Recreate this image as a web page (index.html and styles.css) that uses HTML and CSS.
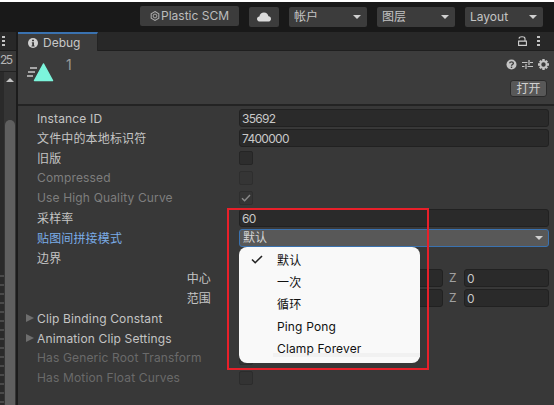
FILE: index.html
```html
<!DOCTYPE html>
<html lang="en">

<head>
    <meta charset="UTF-8">
    <title>Debug</title>
    <link rel="stylesheet" href="styles.css">
</head>

<body>
<div class="toolbar">
    <div class="tool-btn plastic">
        <svg class="plastic-icon" width="10" height="10" viewBox="0 0 10 10"><path d="M5 .6 8.8 2.8V7.200L5 9.400 1.200 7.200V2.800Z" fill="none" stroke="#a8a8a8" stroke-width="1.100"/><circle cx="5" cy="5" r="1.900" fill="none" stroke="#a8a8a8"/></svg>
        <span>Plastic SCM</span>
    </div>
    <div class="tool-btn cloud">
        <svg width="14" height="10" viewBox="0 0 14 10"><path d="M3 9.500C1.300 9.500 0 8.400 0 6.900 0 5.500 1 4.500 2.400 4.400 2.800 2 4.700.5 7 .5 9.300.5 11 2 11.500 4.300 13 4.400 14 5.500 14 6.900 14 8.400 12.800 9.500 11.200 9.500Z" fill="#dcdcdc"/></svg>
    </div>
    <div class="tool-btn drop"><span>帐户</span><i class="caret"></i></div>
    <div class="tool-btn drop"><span>图层</span><i class="caret"></i></div>
    <div class="tool-btn drop"><span>Layout</span><i class="caret"></i></div>
</div>

<div class="main">
    <div class="side">
        <div class="side-head">
            <svg width="3" height="10" viewBox="0 0 3 10"><path d="M0 0h3v2H0zM0 4h3v2H0zM0 8h3v2H0z" fill="#c4c4c4"/></svg>
        </div>
        <div class="side-num">25</div>
        <div class="side-body">
            <div class="side-edge"></div>
            <div class="side-scroll">
                <i class="scroll-up"></i>
                <div class="scroll-thumb"></div>
            </div>
        </div>
    </div>

    <div class="panel">
        <div class="tabbar">
            <div class="tab">
                <svg width="10" height="10" viewBox="0 0 10 10"><circle cx="5" cy="5" r="5" fill="#d2d2d2"/><path d="M4 1.800h2v1.500H4zM3.800 4.200H6v3.200h.6v1H3.500v-1h.7V5.200h-.4z" fill="#3c3c3c"/></svg>
                <span>Debug</span>
            </div>
            <div class="tab-tools">
                <svg width="9" height="10" viewBox="0 0 9 10"><path d="M1 2.600C1.200.2 6.800.2 7 2.600V5" fill="none" stroke="#d0d0d0" stroke-width="1.100"/><path d="M.6 5.100h7.800v4.300H.6z" fill="none" stroke="#d0d0d0" stroke-width="1.100"/></svg>
                <svg class="dots" width="3" height="10" viewBox="0 0 3 10"><path d="M0 0h3v2H0zM0 4h3v2H0zM0 8h3v2H0z" fill="#c4c4c4"/></svg>
            </div>
        </div>

        <div class="head">
            <div class="asset-icon">
                <svg width="28" height="21" viewBox="0 0 28 21"><path d="M4 7h7M2 11h7M1 15h6" stroke="#c9c9c9" stroke-width="1.600" fill="none"/><path d="M17.500 3 26.500 19.500H8.500Z" fill="#7cf5dc" stroke="#7cf5dc" stroke-width="1.500" stroke-linejoin="round"/></svg>
            </div>
            <div class="asset-name">1</div>
            <div class="head-right">
                <div class="head-icons">
                    <svg width="11" height="11" viewBox="0 0 11 11"><circle cx="5.500" cy="5.500" r="5" fill="#c4c4c4"/><path d="M3.600 4.200C3.800 2.300 7.400 2.300 7.400 4.200 7.400 5.500 5.500 5.400 5.500 6.700" fill="none" stroke="#3c3c3c" stroke-width="1.300"/><path d="M4.800 7.600h1.400V9H4.800z" fill="#3c3c3c"/></svg>
                    <svg width="11" height="11" viewBox="0 0 11 11"><path d="M0 3.500h5.500M8 3.500h3M0 7.500h2.500M5.500 7.500H11M7 1v5M4 5v5" stroke="#c4c4c4" stroke-width="1.200" fill="none"/></svg>
                    <svg width="11" height="11" viewBox="0 0 11 11"><circle cx="5.500" cy="5.500" r="3.200" fill="none" stroke="#c4c4c4" stroke-width="2"/><path d="M4.300 0h2.400v2H4.300zM4.300 9h2.400v2H4.300zM0 4.300h2v2.400H0zM9 4.300h2v2.400H9zM1 2.600 2.600 1 4 2.400 2.400 4zM8.400 1 10 2.600 8.600 4 7 2.400zM1 8.400 2.400 7 4 8.600 2.600 10zM7 8.600 8.600 7 10 8.400 8.400 10z" fill="#c4c4c4"/></svg>
                </div>
                <div class="open-btn">打开</div>
            </div>
        </div>

        <div class="props">
            <div class="row"><label>Instance ID</label><div class="field">35692</div></div>
            <div class="row"><label>文件中的本地标识符</label><div class="field">7400000</div></div>
            <div class="row"><label>旧版</label><div class="check"></div></div>
            <div class="row off"><label>Compressed</label><div class="check"></div></div>
            <div class="row off"><label>Use High Quality Curve</label>
                <div class="check">
                    <svg width="10" height="8" viewBox="0 0 10 8"><path d="M1 4.200 3.600 6.800 9 1" fill="none" stroke="#8a8a8a" stroke-width="1.400"/></svg>
                </div>
            </div>
            <div class="row"><label>采样率</label><div class="field">60</div></div>
            <div class="row"><label class="blue">贴图间拼接模式</label>
                <div class="select"><span>默认</span><i class="caret"></i></div>
            </div>
            <div class="row"><label>边界</label></div>
            <div class="row vec"><label class="sub">中心</label><div class="field"></div><b>Z</b><div class="field">0</div></div>
            <div class="row vec"><label class="sub">范围</label><div class="field"></div><b>Z</b><div class="field">0</div></div>
            <div class="row fold"><i class="tri"></i><label>Clip Binding Constant</label></div>
            <div class="row fold"><i class="tri"></i><label>Animation Clip Settings</label></div>
            <div class="row dim"><label>Has Generic Root Transform</label><div class="check"></div></div>
            <div class="row dim"><label>Has Motion Float Curves</label><div class="check"></div></div>
        </div>
    </div>
</div>

<div class="menu">
    <div class="menu-item">
        <svg width="12" height="9" viewBox="0 0 12 9"><path d="M1 4.500 4.200 7.700 11 1" fill="none" stroke="#222" stroke-width="1.600"/></svg>
        <span>默认</span>
    </div>
    <div class="menu-item"><span>一次</span></div>
    <div class="menu-item"><span>循环</span></div>
    <div class="menu-item"><span>Ping Pong</span></div>
    <div class="menu-item"><span>Clamp Forever</span></div>
    <div class="menu-shade"></div>
</div>
<div class="red-box"></div>
</body>

</html>
```

FILE: styles.css
```css
* {
    box-sizing: border-box;
}
html,
body {
    margin: 0;
    height: 405px;
    overflow: hidden;
}
body {
    position: relative;
    width: 554px;
    background: #383838;
    color: #c4c4c4;
    font: 12px/16px Inter, "Noto Sans CJK SC", sans-serif;
    border-top: 2px solid #fff;
}

/* top bar */
.toolbar {
    display: flex;
    justify-content: flex-end;
    gap: 10px;
    height: 30px;
    padding: 5px 11px 0 0;
    background: #191919;
}
.tool-btn {
    display: flex;
    align-items: center;
    height: 20px;
    background: #3c3c3c;
    border-radius: 2px;
    color: #c4c4c4;
}
.plastic {
    width: 99px;
    margin-top: -1px;
    justify-content: center;
    gap: 1px;
    color: #bdbdbd;
}
.plastic-icon {
    flex: none;
}
.cloud {
    width: 30px;
    justify-content: center;
}
.drop {
    width: 78px;
    justify-content: space-between;
    padding: 0 6px 0 5px;
}
.caret {
    width: 0;
    height: 0;
    border-left: 4px solid transparent;
    border-right: 4px solid transparent;
    border-top: 4px solid #d0d0d0;
}

.main {
    display: flex;
    height: 373px;
}

/* cut off panel on the left */
.side {
    display: flex;
    flex-direction: column;
    flex: none;
    width: 18px;
    border-right: 2px solid #1c1c1c;
}
.side-head {
    flex: none;
    height: 19px;
    padding: 4px 0 0 2px;
    background: #282828;
    border-bottom: 1px solid #1c1c1c;
}
.side-head svg {
    display: block;
}
.side-num {
    flex: none;
    height: 21px;
    padding-top: 1px;
    letter-spacing: -1.500px;
    color: #b4b4b4;
    background: #383838;
    border-bottom: 1px solid #222;
}
.side-body {
    display: flex;
    flex: 1;
    min-height: 0;
    overflow: hidden;
}
.side-edge {
    width: 4px;
    background: #2a2a2a repeating-linear-gradient(#2a2a2a 0 7px, #4a4a4a 7px 9px) 0 196px no-repeat;
}
.side-scroll {
    flex: 1;
    padding: 6px 1px 0;
    background: #353535;
}
.scroll-up {
    display: block;
    width: 0;
    margin: 0 auto;
    border-left: 4px solid transparent;
    border-right: 4px solid transparent;
    border-bottom: 4px solid #c4c4c4;
}
.scroll-thumb {
    height: 300px;
    margin-top: 38px;
    background: #5f5f5f;
    border-radius: 5px 5px 0 0;
}

/* inspector */
.panel {
    flex: 1;
}
.tabbar {
    display: flex;
    justify-content: space-between;
    height: 19px;
    background: #282828;
    border-bottom: 1px solid #1f1f1f;
}
.tab {
    display: flex;
    align-items: center;
    gap: 5px;
    width: 80px;
    height: 19px;
    padding-left: 10px;
    background: #3c3c3c;
    border-top: 2px solid #3a72b0;
    border-right: 1px solid #232323;
    color: #c8c8c8;
}
.tab-tools {
    display: flex;
    align-items: center;
    gap: 10px;
    padding-right: 14px;
}
.head {
    display: flex;
    height: 55px;
    background: #3c3c3c;
    border-bottom: 2px solid #232323;
}
.asset-icon {
    padding: 10px 0 0 8px;
}
.asset-name {
    padding: 6px 0 0 12px;
    color: #9a9a9a;
    font-size: 14px;
}
.head-right {
    margin-left: auto;
    padding: 8px 5px 0 0;
}
.head-icons {
    display: flex;
    gap: 5px;
    justify-content: flex-end;
}
.head-icons svg {
    display: block;
}
.open-btn {
    width: 37px;
    height: 17px;
    margin: 10px 2px 0 auto;
    background: #585858;
    border: 1px solid #2a2a2a;
    border-radius: 3px;
    color: #d0d0d0;
    line-height: 15px;
    text-align: center;
}

.props {
    padding-top: 2px;
}
.row {
    display: flex;
    align-items: center;
    height: 20px;
    padding: 0 5px 0 19px;
}
.row label {
    flex: none;
    width: 202px;
    padding-top: 1px;
    letter-spacing: .15px;
    white-space: nowrap;
}
.row label.blue {
    color: #7bade8;
}
.row.off label {
    padding-top: 0;
    color: #7e7e7e;
}
.row.dim label {
    padding-top: 0;
    color: #6a6a6a;
}
.field {
    flex: 1;
    height: 18px;
    padding-left: 2px;
    background: #2a2a2a;
    border: 1px solid #212121;
    border-radius: 3px;
    color: #c8c8c8;
    letter-spacing: -.7px;
    line-height: 17px;
}
.check {
    display: flex;
    align-items: center;
    justify-content: center;
    width: 14px;
    height: 14px;
    background: #2d2d2d;
    border: 1px solid #252525;
    border-radius: 2px;
}
.off .check {
    background: #353535;
    border-color: #2e2e2e;
}
.dim .check {
    background: #333;
    border-color: #2c2c2c;
}
.select {
    display: flex;
    flex: 1;
    align-items: center;
    justify-content: space-between;
    height: 18px;
    padding: 0 5px 0 3px;
    background: #585858;
    border: 1px solid #3a72b0;
    border-radius: 3px;
    color: #d4d4d4;
}
.vec label.sub {
    width: 174px;
    text-align: right;
}
.vec .field:first-of-type {
    margin-left: 28px;
}
.vec b {
    width: 21px;
    padding-left: 6px;
    font-weight: normal;
    color: #a0a0a0;
}
.vec .field:last-child {
    flex: none;
    width: 85px;
}
.fold {
    padding-left: 8px;
}
.tri {
    flex: none;
    width: 0;
    margin-right: 3px;
    border-top: 4px solid transparent;
    border-bottom: 4px solid transparent;
    border-left: 8px solid #6e6e6e;
}

/* popup and the red mark lie over the form */
.menu {
    position: absolute;
    left: 239px;
    top: 245px;
    width: 181px;
    height: 116px;
    padding-top: 3px;
    background: #f9f9f9;
    border-radius: 8px;
    color: #111;
}
.menu-item {
    position: relative;
    z-index: 1;
    height: 22px;
    padding-left: 38px;
    line-height: 22px;
    letter-spacing: .15px;
}
.menu-item svg {
    position: absolute;
    left: 12px;
    top: 5px;
}
.menu-shade {
    position: absolute;
    left: 34px;
    right: 0;
    bottom: 6px;
    height: 4px;
    background: #f1f1f1;
}
.red-box {
    position: absolute;
    left: 227px;
    top: 206px;
    width: 202px;
    height: 162px;
    border: 2px solid #e8202a;
}
```
